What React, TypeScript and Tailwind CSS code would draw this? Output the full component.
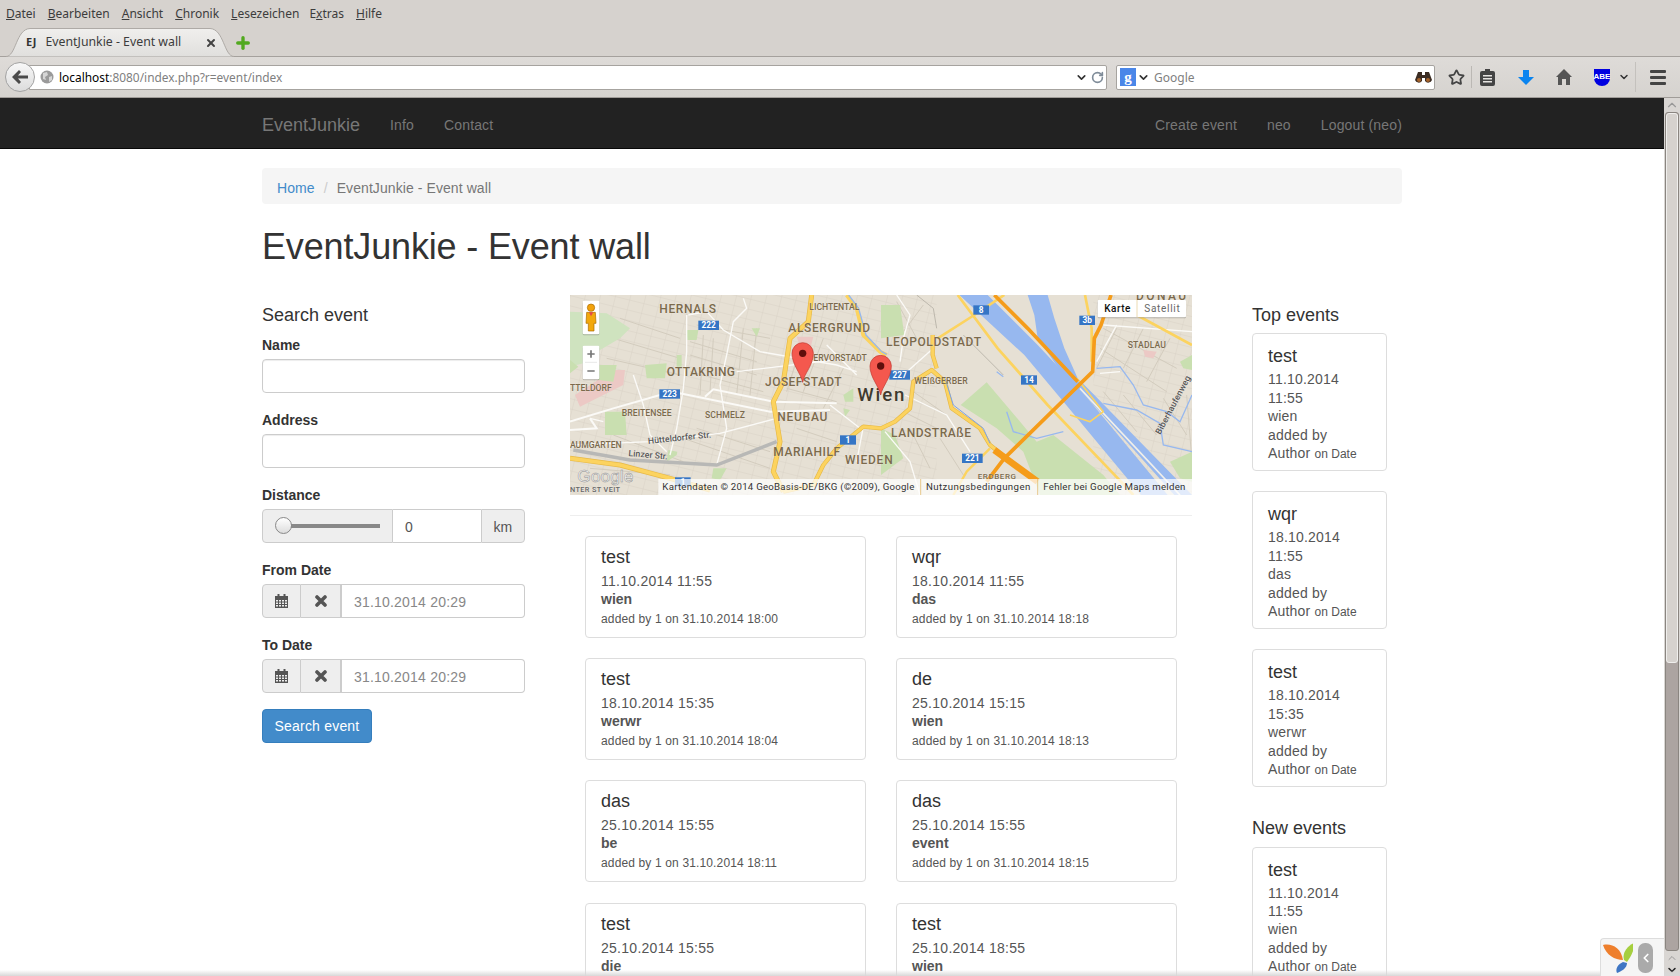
import React from 'react';
import { ChevronDown, ChevronUp, ChevronLeft, RotateCw, Star, X, Plus } from 'lucide-react';

const events = [
  { title: 'test', date: '11.10.2014 11:55', place: 'wien', added: '31.10.2014 18:00' },
  { title: 'wqr', date: '18.10.2014 11:55', place: 'das', added: '31.10.2014 18:18' },
  { title: 'test', date: '18.10.2014 15:35', place: 'werwr', added: '31.10.2014 18:04' },
  { title: 'de', date: '25.10.2014 15:15', place: 'wien', added: '31.10.2014 18:13' },
  { title: 'das', date: '25.10.2014 15:55', place: 'be', added: '31.10.2014 18:11' },
  { title: 'das', date: '25.10.2014 15:55', place: 'event', added: '31.10.2014 18:15' },
  { title: 'test', date: '25.10.2014 15:55', place: 'die', added: '31.10.2014 18:16' },
  { title: 'test', date: '25.10.2014 18:55', place: 'wien', added: '31.10.2014 18:20' },
];

const topEvents = [
  { title: 'test', date: '11.10.2014 11:55', place: 'wien' },
  { title: 'wqr', date: '18.10.2014 11:55', place: 'das' },
  { title: 'test', date: '18.10.2014 15:35', place: 'werwr' },
];

const menu = [
  ['D', 'atei'],
  ['B', 'earbeiten'],
  ['A', 'nsicht'],
  ['C', 'hronik'],
  ['L', 'esezeichen'],
];

function BrowserChrome() {
  return (
    <div className="shrink-0 bg-[#d6d2ce] font-['Noto_Sans',sans-serif] text-[#3c3c3c]">
      <div className="flex h-[28px] items-center gap-[12px] pl-[6px] text-[12px]">
        {menu.map(([first, rest]) => (
          <span key={first}>
            <span className="underline">{first}</span>
            {rest}
          </span>
        ))}
        <span className="ml-[-2px]">
          E<span className="underline">x</span>tras
        </span>
        <span>
          <span className="underline">H</span>ilfe
        </span>
      </div>
      <div className="flex h-[29px] items-end border-b border-[#a5a19d] pl-[12px]">
        <div className="relative mb-[-1px] flex h-[29px] w-[216px] items-center pl-[14px] pr-[11px] text-[12.3px]">
          <svg width="228" height="29" viewBox="0 0 228 29" className="absolute left-[-6px] top-0">
            <defs>
              <linearGradient id="tabFill" x1="0" y1="0" x2="0" y2="1">
                <stop offset="0" stopColor="#f0efed" />
                <stop offset="1" stopColor="#e0dfdd" />
              </linearGradient>
            </defs>
            <path d="M0 28.5 C10 28.5 10 1 24 0.5 H204 C218 1 218 28.5 228 28.5 Z" fill="url(#tabFill)" />
            <path d="M0 28.5 C10 28.5 10 1 24 0.5 H204 C218 1 218 28.5 228 28.5" fill="none" stroke="#aeaaa6" />
          </svg>
          <span className="relative mr-[9px] text-[11px] font-bold text-[#333]">EJ</span>
          <span className="relative flex-1">EventJunkie - Event wall</span>
          <X className="relative h-[12px] w-[12px] text-[#444]" strokeWidth={4} />
        </div>
        <Plus className="mb-[4px] ml-[6px] h-[18px] w-[18px] text-[#52a91f]" strokeWidth={4.5} />
      </div>
      <div className="flex h-[41px] items-center border-b border-[#a09c98] bg-gradient-to-b from-[#dedbd8] to-[#d6d3cf] pr-[12px]">
        <div className="z-10 ml-[5px] flex h-[30px] w-[30px] shrink-0 items-center justify-center rounded-full border border-[#a3a3a3] bg-gradient-to-b from-[#f8f8f8] to-[#dcdcdc]">
          <svg width="16" height="14" viewBox="0 0 16 14">
            <path d="M7 0 L0 7 L7 14 L9 12 L6 8.5 H16 V5.5 H6 L9 2 Z" fill="#4a4a4a" />
          </svg>
        </div>
        <div className="ml-[-6px] flex h-[25px] w-[1078px] shrink-0 items-center rounded-r-[2px] border border-[#a6a39f] bg-white pl-[10px] pr-[2px] text-[11.9px]">
          <svg width="14" height="14" viewBox="0 0 14 14" className="mr-[5px] shrink-0">
            <circle cx="7" cy="7" r="6.5" fill="#9a9a9a" />
            <path d="M3 3 L7 2 L8 5 L5 7 L6 10 L3 9 Z M9 7 L12 6 L12 10 L9 12 Z" fill="#d5d5d5" />
          </svg>
          <span className="pt-[2px] text-black">localhost</span>
          <span className="flex-1 pt-[2px] text-[#808080]">:8080/index.php?r=event/index</span>
          <ChevronDown className="mr-[3px] h-[13px] w-[13px] text-[#333]" strokeWidth={3} />
          <RotateCw className="h-[13px] w-[13px] text-[#7f8c99]" strokeWidth={3} />
        </div>
        <div className="ml-[9px] flex h-[25px] w-[319px] shrink-0 items-center rounded-[2px] border border-[#a6a39f] bg-white pl-[3px] pr-[2px] text-[12px] text-[#808080]">
          <span className="flex h-[18px] w-[16px] items-center justify-center bg-[#4a86e8] font-['Liberation_Serif',serif] text-[15px] font-bold text-white">
            g
          </span>
          <ChevronDown className="mx-[1px] h-[13px] w-[13px] text-[#333]" strokeWidth={3} />
          <span className="ml-[3px] flex-1 pt-[2px]">Google</span>
          <svg width="17" height="13" viewBox="0 0 17 13">
            <path d="M3 1 H7 V4 H10 V1 H14 L17 9 A4 4 0 0 1 10 10 V7 H7 V10 A4 4 0 0 1 0 9 Z" fill="#3b2c22" />
            <circle cx="4" cy="9" r="2" fill="#a5622a" />
            <circle cx="13" cy="9" r="2" fill="#a5622a" />
          </svg>
        </div>
        <Star className="ml-[13px] h-[17px] w-[17px] shrink-0 text-[#444]" strokeWidth={2.5} />
        <div className="ml-[6px] h-[22px] w-px shrink-0 bg-[#bbb8b4]" />
        <svg width="15" height="17" viewBox="0 0 15 17" className="ml-[8px] shrink-0">
          <path d="M5 0 H10 V2 H13 A2 2 0 0 1 15 4 V15 A2 2 0 0 1 13 17 H2 A2 2 0 0 1 0 15 V4 A2 2 0 0 1 2 2 H5 Z" fill="#444" />
          <path d="M3 6 H12 V7.5 H3 Z M3 9 H12 V10.5 H3 Z M3 12 H12 V13.5 H3 Z" fill="#e6e4e1" />
        </svg>
        <svg width="16" height="15" viewBox="0 0 16 15" className="ml-[23px] shrink-0">
          <path d="M5 0 H11 V7 H16 L8 15 L0 7 H5 Z" fill="#0a84ef" />
        </svg>
        <svg width="16" height="16" viewBox="0 0 16 16" className="ml-[22px] shrink-0">
          <path d="M8 0 L16 8 L14 8 L14 16 H10 V10 H6 V16 H2 V8 L0 8 Z" fill="#555" />
        </svg>
        <div className="ml-[22px] flex h-[17px] w-[16px] shrink-0 items-center justify-center rounded-b-[8px] bg-[#0000e0] font-['Liberation_Sans',sans-serif] text-[8px] font-bold text-white">
          ABE
        </div>
        <ChevronDown className="ml-[8px] h-[12px] w-[12px] shrink-0 text-[#333]" strokeWidth={3} />
        <div className="ml-[5px] h-[30px] w-px shrink-0 bg-[#c4c1bd]" />
        <div className="ml-[14px] flex w-[16px] shrink-0 flex-col gap-[3px]">
          <div className="h-[3px] rounded-[1px] bg-[#444]" />
          <div className="h-[3px] rounded-[1px] bg-[#444]" />
          <div className="h-[3px] rounded-[1px] bg-[#444]" />
        </div>
      </div>
    </div>
  );
}

function Navbar() {
  return (
    <div className="flex h-[51px] shrink-0 items-center border-b border-[#080808] bg-[#222] pl-[262px] pr-[262px] pt-[4px] text-[14px] tracking-[0.15px] text-[#777]">
      <span className="mr-[30px] text-[18px] tracking-normal">EventJunkie</span>
      <span className="mr-[30px]">Info</span>
      <span>Contact</span>
      <span className="ml-auto mr-[30px]">Create event</span>
      <span className="mr-[30px]">neo</span>
      <span>Logout (neo)</span>
    </div>
  );
}

function Field({ label, children }: { label: string; children: React.ReactNode }) {
  return (
    <div className="mb-[16px]">
      <div className="mb-[4px] pt-[1px] text-[14px] font-bold leading-[20px]">{label}</div>
      {children}
    </div>
  );
}

function CalendarIcon() {
  return (
    <svg width="13" height="14" viewBox="0 0 13 14">
      <path d="M0 2 H2.5 V0 H4.5 V2 H8.5 V0 H10.5 V2 H13 V14 H0 Z" fill="#555" />
      <path
        d="M1 6 H3 V7.5 H1 Z M4 6 H6 V7.5 H4 Z M7 6 H9 V7.5 H7 Z M10 6 H12 V7.5 H10 Z M1 8.5 H3 V10 H1 Z M4 8.5 H6 V10 H4 Z M7 8.5 H9 V10 H7 Z M10 8.5 H12 V10 H10 Z M1 11 H3 V12.5 H1 Z M4 11 H6 V12.5 H4 Z M7 11 H9 V12.5 H7 Z M10 11 H12 V12.5 H10 Z"
        fill="#eee"
      />
    </svg>
  );
}

function DateInput() {
  return (
    <div className="flex h-[34px] text-[14px]">
      <div className="flex w-[39px] items-center justify-center rounded-l-[4px] border border-[#ccc] bg-[#eee]">
        <CalendarIcon />
      </div>
      <div className="flex w-[41px] items-center justify-center border-y border-r-2 border-[#ccc] bg-[#eee]">
        <svg width="12" height="12" viewBox="0 0 12 12">
          <path d="M2 2 L10 10 M10 2 L2 10" stroke="#555" strokeWidth="3.6" strokeLinecap="round" />
        </svg>
      </div>
      <div className="flex flex-1 items-center rounded-r-[4px] border-y border-r border-[#ccc] pl-[12px] pt-[2px] tracking-[0.2px] text-[#888]">
        31.10.2014 20:29
      </div>
    </div>
  );
}

function SearchForm() {
  return (
    <div className="w-[262.5px] shrink-0 pt-[10px]">
      <h4 className="mb-[9px] pt-[1px] text-[18px] leading-[19.8px]">Search event</h4>
      <Field label="Name">
        <div className="h-[34px] rounded-[4px] border border-[#ccc] shadow-[inset_0_1px_1px_rgba(0,0,0,0.075)]" />
      </Field>
      <Field label="Address">
        <div className="h-[34px] rounded-[4px] border border-[#ccc] shadow-[inset_0_1px_1px_rgba(0,0,0,0.075)]" />
      </Field>
      <Field label="Distance">
        <div className="flex h-[34px] text-[14px] text-[#555]">
          <div className="relative flex w-[131px] items-center rounded-l-[4px] border border-[#ccc] bg-[#eee] pl-[20px]">
            <div className="h-[4px] w-[97px] bg-[#888]" />
            <div className="absolute left-[12px] top-[7px] h-[17px] w-[17px] rounded-full border border-[#888] bg-gradient-to-b from-[#fff] to-[#ddd]" />
          </div>
          <div className="flex w-[88px] items-center border-y border-[#ccc] pl-[12px] pt-[2px]">0</div>
          <div className="flex flex-1 items-center justify-center rounded-r-[4px] border border-[#ccc] bg-[#eee] pt-[2px]">km</div>
        </div>
      </Field>
      <Field label="From Date">
        <DateInput />
      </Field>
      <Field label="To Date">
        <DateInput />
      </Field>
      <button className="h-[34px] w-[110px] rounded-[4px] border border-[#357ebd] bg-[#428bca] pt-[1px] text-[14px] tracking-[0.2px] text-white">
        Search event
      </button>
    </div>
  );
}

function Pin({ x, y }: { x: number; y: number }) {
  return (
    <g transform={`translate(${x} ${y})`}>
      <path d="M0 87 C-5 60 -32 35 -32 0 A32 32 0 1 1 32 0 C32 35 5 60 0 87 Z" fill="#f4584e" stroke="#c0362e" strokeWidth="2" />
      <circle r="11" fill="#5e0f0c" />
    </g>
  );
}

function Shield({ x, y, w, label }: { x: number; y: number; w: number; label: string }) {
  return (
    <g>
      <rect x={x} y={y} width={w} height="28" fill="#3575c5" />
      <text x={x + w / 2} y={y + 22} textAnchor="middle" fontSize="25" fontWeight="700" fill="#fff">
        {label}
      </text>
    </g>
  );
}

function Label({ x, y, w, size = 36, children, rotate = 0, fill = '#7b6a4c', weight = 500 }: {
  x: number; y: number; w: number; size?: number; children: string; rotate?: number; fill?: string; weight?: number;
}) {
  return (
    <text
      x={x}
      y={y}
      fontSize={size}
      fontWeight={weight}
      fill={fill}
      textLength={w}
      lengthAdjust="spacing"
      stroke="#ffffff"
      strokeOpacity="0.35"
      strokeWidth="2"
      paintOrder="stroke"
      transform={rotate ? `rotate(${rotate} ${x} ${y})` : undefined}
    >
      {children}
    </text>
  );
}

function MapView() {
  const street = '#fbfaf7';
  const ring = '#fcd35f';
  const ringEdge = '#e7b947';
  const streets = 'M130 130 L330 190 M110 190 L330 240 M150 70 L330 130 M360 140 L560 200 M360 180 L560 240 M360 230 L580 290 M380 90 L600 130 M380 400 L600 470 M340 430 L600 520 M520 100 L500 300 M560 100 L540 300 M400 120 L390 300 M430 130 L420 290 M650 280 L800 320 M680 400 L800 440 M130 420 L340 500 M60 520 L300 540 M700 130 L650 290 M760 130 L700 290 M820 220 L760 340 M980 20 L1040 130 M1060 30 L1000 110 M1030 290 L1130 360 M1000 350 L1120 410 M1020 400 L1080 520 M1110 430 L1180 540 M1600 100 L1820 220 M1590 160 L1790 290 M1640 100 L1580 220 M1720 100 L1660 220 M1800 130 L1730 260 M1660 300 L1760 420 M1600 290 L1700 410 M1780 310 L1850 420 M1850 300 L1866 500';
  return (
    <svg viewBox="0 0 1866 600" className="block h-[200px] w-[622px] font-['Roboto',sans-serif]">
      <defs>
        <pattern id="blocks" width="44" height="30" patternUnits="userSpaceOnUse" patternTransform="rotate(14)">
          <path d="M0 0 H44 M0 0 V30" stroke="#d6cfc2" strokeWidth="2.5" fill="none" />
        </pattern>
      </defs>
      <rect width="1866" height="600" fill="#e6e0d4" />
      <rect width="1100" height="600" fill="url(#blocks)" />
      <rect x="1570" width="296" height="600" fill="url(#blocks)" />
      <path d={streets} stroke="#d3ccbe" strokeWidth="3" fill="none" />

      {/* parks and pink areas */}
      <path d="M0 50 L110 55 L180 100 L150 130 L90 165 L40 205 L0 215 Z" fill="#cfe3bf" />
      <path d="M15 300 L130 225 L165 225 L160 270 L100 300 L30 335 Z" fill="#ecc9c5" />
      <path d="M85 210 L140 210 L130 260 L85 255 Z M225 210 L290 205 L285 250 L230 250 Z M105 350 L165 350 L170 420 L105 420 Z M350 105 L385 105 L380 135 L352 135 Z M320 180 L335 180 L335 215 L320 215 Z" fill="#c9dfb0" />
      <path d="M0 195 L25 215 L0 235 Z M290 500 L320 480 L322 470 L295 465 Z M430 520 L470 520 L450 555 L425 550 Z" fill="#c9dfb0" />
      <path d="M680 125 L730 125 L720 165 L690 155 Z" fill="#ecc9c5" />
      <path d="M820 300 L850 280 L850 320 L825 320 Z M820 340 L840 345 L825 365 Z M545 100 L570 100 L560 125 Z" fill="#c9dfb0" />
      <path d="M933 30 L990 30 L1003 120 L933 130 Z M1172 330 L1250 262 L1325 350 L1400 440 L1450 420 L1600 540 L1650 600 L1410 600 L1360 470 L1280 400 Z" fill="#c9dfb0" />
      <path d="M933 400 L975 420 L1000 490 L933 540 Z" fill="#c9dfb0" />
      <path d="M1720 165 L1760 170 L1750 190 L1725 185 Z" fill="#ecc9c5" />
      <path d="M1830 200 L1866 180 L1866 225 L1840 220 Z M1800 500 L1866 470 L1866 560 L1830 550 Z" fill="#c9dfb0" />

      {/* danube */}
      <path d="M1168 0 L1253 0 L1403 150 L1553 310 L1793 600 L1713 600 L1493 335 L1363 180 Z" fill="#97b8ef" />
      <path d="M1373 0 L1433 0 L1453 70 L1483 160 L1523 250 L1573 300 L1866 600 L1813 600 L1553 310 L1473 230 L1403 130 L1393 60 Z" fill="#97b8ef" />
      <path d="M1530 280 L1830 600" stroke="#f1efe9" strokeWidth="5" fill="none" />
      <path d="M1580 220 L1650 215 L1690 270 L1720 330 L1790 350 L1830 380 L1866 300 M1600 325 L1700 345 L1770 385 L1780 450 L1866 470 M1310 350 L1330 410 L1400 430 L1480 410 M1280 230 L1300 245" stroke="#97b8ef" strokeWidth="4" fill="none" />

      {/* streets */}
      <path d="M0 380 L130 340 L270 300 L330 295 L600 350 L780 345 M405 305 L430 283 L610 320 L800 325 M0 405 L80 400 L60 370" stroke={street} strokeWidth="6" fill="none" />
      <path d="M350 60 L350 170 L340 280 L320 400 L300 480 M520 10 L530 40 L490 80 L470 180 L450 270 L470 400 L440 510 M355 60 L410 50 L460 105 L570 170 L800 210 L860 230 M500 230 L790 195 M190 240 L220 330 L240 420 L290 470 M0 450 L240 440 L450 415 L620 370 M770 150 L860 240 M780 330 L870 400 M880 395 L860 500 M100 380 L60 370" stroke={street} strokeWidth="4" fill="none" />
      <path d="M980 0 L1020 60 L1000 130 L990 200 M1090 160 L1000 240 M1005 300 L1130 360 L1200 470 M945 410 L1020 500 L1050 600 M1600 90 L1866 110 M1590 235 L1650 230 M1640 90 L1580 200" stroke={street} strokeWidth="4" fill="none" />
      <path d="M1040 0 L1090 40 L1100 100 M1180 120 L1300 240" stroke="#bdb8ad" strokeWidth="3" fill="none" />
      <path d="M10 465 L180 495 L440 510 L620 440" stroke="#b8b8b6" strokeWidth="10" fill="none" />

      {/* yellow ring roads */}
      <g fill="none" strokeLinejoin="round">
        <path d="M725 0 L715 80 L660 130 L640 260 L610 320 L630 440 L610 530 L640 590" stroke={ringEdge} strokeWidth="15" />
        <path d="M725 0 L715 80 L660 130 L640 260 L610 320 L630 440 L610 530 L640 590" stroke={ring} strokeWidth="11" />
        <path d="M0 490 L150 510 L300 550 L420 585" stroke={ringEdge} strokeWidth="15" />
        <path d="M0 490 L150 510 L300 550 L420 585" stroke={ring} strokeWidth="11" />
        <path d="M640 590 L730 570 L760 510 L800 460 L880 395 L933 400 L975 380 L1020 340 L1030 260 L1085 225 L1125 260 L1145 340 L1230 400 L1260 450 L1310 490 M1088 120 L1088 180 L1100 220" stroke={ringEdge} strokeWidth="13" />
        <path d="M640 590 L730 570 L760 510 L800 460 L880 395 L933 400 L975 380 L1020 340 L1030 260 L1085 225 L1125 260 L1145 340 L1230 400 L1260 450 L1310 490 M1088 120 L1088 180 L1100 220" stroke={ring} strokeWidth="9" />
        <path d="M830 0 L860 40 L880 120 L930 170 L950 180" stroke={ring} strokeWidth="12" />
        <path d="M836 0 L866 40 L888 120 L935 170 L950 178" stroke="#97b8ef" strokeWidth="4" />
        <path d="M1125 250 L1150 330 L1240 400 L1260 445" stroke="#7da3e5" strokeWidth="3" />
        <path d="M1163 0 L1283 160 L1433 330 L1653 560 L1690 600 M1103 130 L1213 60 L1303 0 M1545 0 L1565 100 L1565 200 M1700 60 L1866 150" stroke={ring} strokeWidth="8" />
        <path d="M1520 250 L1600 350 L1560 380 L1500 360" stroke={ring} strokeWidth="5" />
        <path d="M1150 600 L1190 530 L1260 460" stroke={ring} strokeWidth="7" />
      </g>

      {/* motorway */}
      <g fill="none" stroke="#f59c1a">
        <path d="M1273 0 L1373 100 L1523 260" strokeWidth="11" />
        <path d="M1623 0 L1593 90 L1573 130 L1568 230 L1303 490 L1250 560" strokeWidth="11" />
        <path d="M1273 465 L1403 560" strokeWidth="20" />
      </g>

      <Label x={268} y={53} w={170}>HERNALS</Label>
      <Label x={718} y={44} w={150} size={26}>LICHTENTAL</Label>
      <Label x={655} y={110} w={245}>ALSERGRUND</Label>
      <Label x={290} y={242} w={205}>OTTAKRING</Label>
      <Label x={585} y={272} w={230}>JOSEFSTADT</Label>
      <Label x={730} y={197} w={160} size={26}>ERVORSTADT</Label>
      <Label x={622} y={378} w={150}>NEUBAU</Label>
      <Label x={610} y={482} w={200}>MARIAHILF</Label>
      <Label x={825} y={507} w={143}>WIEDEN</Label>
      <Label x={155} y={362} w={150} size={26}>BREITENSEE</Label>
      <Label x={405} y={368} w={120} size={26}>SCHMELZ</Label>
      <Label x={0} y={288} w={125} size={26}>TTELDORF</Label>
      <Label x={0} y={460} w={155} size={26}>AUMGARTEN</Label>
      <Label x={235} y={447} w={190} size={26} rotate={-6} fill="#555">Hütteldorfer Str.</Label>
      <Label x={175} y={483} w={118} size={26} rotate={5} fill="#555">Linzer Str.</Label>
      <Label x={862} y={318} w={141} size={56} fill="#3f3a2e">Wien</Label>
      <Label x={948} y={152} w={285}>LEOPOLDSTADT</Label>
      <Label x={1033} y={267} w={160} size={26}>WEIßGERBER</Label>
      <Label x={963} y={425} w={240}>LANDSTRAßE</Label>
      <Label x={1673} y={158} w={115} size={26}>STADLAU</Label>
      <Label x={1223} y={552} w={115} size={24}>ERDBERG</Label>
      <Label x={1698} y={14} w={150} size={36}>DONAU</Label>
      <Label x={1771} y={420} w={195} size={26} rotate={-62} fill="#555">Biberhaufenweg</Label>

      <Shield x={385} y={77} w={62} label="222" />
      <Shield x={268} y={283} w={62} label="223" />
      <Shield x={810} y={421} w={48} label="1" />
      <Shield x={1210} y={31} w={47} label="8" />
      <Shield x={958} y={226} w={62} label="227" />
      <Shield x={1353} y={241} w={48} label="14" />
      <Shield x={1528} y={62} w={47} label="3b" />
      <Shield x={1176} y={476} w={62} label="221" />
      <Shield x={315} y={547} w={47} label="1" />

      <Pin x={698} y={175} />
      <Pin x={932} y={213} />

      {/* controls */}
      <g style={{ filter: 'drop-shadow(0 2px 2px rgba(0,0,0,0.3))' }}>
        <rect x="38" y="17" width="50" height="101" rx="4" fill="#fff" />
        <rect x="38" y="152" width="50" height="101" rx="4" fill="#fff" />
        <rect x="1583" y="15" width="265" height="52" rx="3" fill="#fff" />
      </g>
      <path d="M45 202 H81" stroke="#ddd" strokeWidth="2" />
      <path d="M52 177 H74 M63 166 V188 M52 228 H74" stroke="#777" strokeWidth="5" fill="none" />
      <path d="M1701 15 V67" stroke="#e3c98d" strokeWidth="2" />
      <circle cx="63" cy="38" r="11" fill="#f2a20c" stroke="#a86a00" strokeWidth="2" />
      <path d="M50 52 H76 L78 85 H72 V108 H55 V85 H48 Z" fill="#f2a80d" stroke="#a86a00" strokeWidth="2" />
      <path d="M57 52 H70 L63 64 Z" fill="#e5484d" />
      <text x="1603" y="51" fontSize="30" fontWeight="500" fill="#111" textLength="78">Karte</text>
      <text x="1723" y="51" fontSize="30" fill="#666" textLength="106">Satellit</text>

      {/* bottom strip */}
      <rect x="265" y="552" width="1601" height="48" fill="#fff" fillOpacity="0.72" />
      <path d="M1052 552 V600 M1403 552 V600" stroke="#e0b25a" strokeWidth="2" />
      <g fontSize="29" fill="#333">
        <text x="277" y="584" textLength="756">Kartendaten © 2014 GeoBasis-DE/BKG (©2009), Google</text>
        <text x="1068" y="584" textLength="313">Nutzungsbedingungen</text>
        <text x="1420" y="584" textLength="426">Fehler bei Google Maps melden</text>
      </g>
      <Label x={0} y={590} w={150} size={22} fill="#666">NTER ST VEIT</Label>
      <text x="22" y="562" fontSize="52" fontWeight="500" fill="#f4f4f4" stroke="#8f8f8f" strokeWidth="1.5" textLength="168" fontFamily="Liberation Sans, sans-serif">
        Google
      </text>
    </svg>
  );
}

function EventCard({ title, date, place, added }: { title: string; date: string; place: string; added: string }) {
  return (
    <div className="h-[102px] rounded-[4px] border border-[#ddd] px-[15px] pt-[10px]">
      <div className="text-[18px] leading-[20px] text-[#333]">{title}</div>
      <div className="mt-[4px] text-[14px] leading-[20px] tracking-[0.27px] text-[#555]">{date}</div>
      <div className="text-[14px] font-bold leading-[17px] text-[#555]">{place}</div>
      <div className="mt-[1px] text-[12px] leading-[20px] tracking-[0.14px] text-[#555]">added by 1 on {added}</div>
    </div>
  );
}

function SideCard({ title, date, place }: { title: string; date: string; place: string }) {
  return (
    <div className="mb-[20.6px] h-[137.4px] rounded-[4px] border border-[#ddd] pl-[15px] pr-[20px] pt-[12px]">
      <div className="mb-[4px] text-[18px] leading-[20px] text-[#333]">{title}</div>
      <div className="text-[14px] leading-[18.4px] tracking-[0.2px] text-[#555]">
        <div>{date}</div>
        <div>{place}</div>
        <div>
          added by Author <span className="text-[12px] tracking-normal">on Date</span>
        </div>
      </div>
    </div>
  );
}

function SideColumn() {
  return (
    <div className="ml-[60px] w-[135px] shrink-0 pt-[11px]">
      <h4 className="mb-[8px] text-[18px] leading-[19.8px]">Top events</h4>
      {topEvents.map((e, i) => (
        <SideCard key={i} {...e} />
      ))}
      <h4 className="mb-[8px] mt-[32px] text-[18px] leading-[19.8px]">New events</h4>
      <SideCard {...topEvents[0]} />
    </div>
  );
}

function Scrollbar() {
  return (
    <div className="flex w-[16px] shrink-0 flex-col items-center bg-[#d9d6d3] text-[#444]">
      <ChevronUp className="h-[14px] w-[14px] text-[#999]" strokeWidth={2} />
      <div className="flex h-[839px] w-[14px] flex-col rounded-[3px] border border-[#8a8580] bg-[#aca4a1]">
        <div className="h-[550px] rounded-[3px] border border-[#f0efed] bg-[#d6d2ce]" />
      </div>
      <ChevronUp className="mt-[1px] h-[12px] w-[12px] text-[#999]" strokeWidth={2} />
      <ChevronDown className="h-[12px] w-[12px] text-[#222]" strokeWidth={3} />
    </div>
  );
}

export default function App() {
  return (
    <div className="relative flex h-[976px] w-[1680px] flex-col overflow-hidden bg-white font-['Liberation_Sans',sans-serif] text-[#333]">
      <BrowserChrome />
      <div className="flex min-h-0 flex-1">
        <div className="flex min-w-0 flex-1 flex-col overflow-hidden">
          <Navbar />
          <div className="ml-[262px] w-[1140px] pt-[19px]">
            <div className="flex h-[36px] items-center rounded-[4px] bg-[#f5f5f5] px-[15px] pt-[5px] text-[14px] tracking-[0.08px]">
              <span className="text-[#428bca]">Home</span>
              <span className="px-[9px] text-[#ccc]">/</span>
              <span className="text-[#777]">EventJunkie - Event wall</span>
            </div>
            <h1 className="mb-[28px] mt-[23px] text-[36px] leading-[39.6px] tracking-[-0.15px]">EventJunkie - Event wall</h1>
            <div className="flex items-start">
              <SearchForm />
              <div className="ml-[45.5px] w-[622px] shrink-0">
                <MapView />
                <div className="my-[20px] border-t border-[#eee]" />
                <div className="grid grid-cols-2 gap-x-[30px] gap-y-[20.4px] px-[15px]">
                  {events.map((e, i) => (
                    <EventCard key={i} {...e} />
                  ))}
                </div>
              </div>
              <SideColumn />
            </div>
          </div>
        </div>
        <Scrollbar />
      </div>
      <div className="absolute bottom-0 left-0 h-[6px] w-full bg-gradient-to-b from-transparent to-[#d8d8d8]" />
      <div className="absolute bottom-0 right-[16px] flex h-[38px] w-[64px] items-center rounded-tl-[4px] border-l border-t border-[#ddd] bg-[#f5f5f5] pl-[2px]">
        <svg width="30" height="30" viewBox="0 0 30 30">
          <path d="M0 2 C8 0 18 4 20 17 C12 17 3 12 0 2 Z" fill="#ee7f2d" />
          <path d="M21 17 C19 10 24 3 31 0 C32 7 27 15 24 19 Z" fill="#a6cf3f" />
          <path d="M20 19 L24 20 C24 25 19 28 14 30 C12 26 15 21 20 19 Z" fill="#3f76c4" />
        </svg>
        <div className="ml-[5px] flex h-[30px] w-[15px] items-center justify-center rounded-[7px] bg-[#aaa]">
          <ChevronLeft className="h-[14px] w-[14px] text-white" strokeWidth={3} />
        </div>
      </div>
    </div>
  );
}
